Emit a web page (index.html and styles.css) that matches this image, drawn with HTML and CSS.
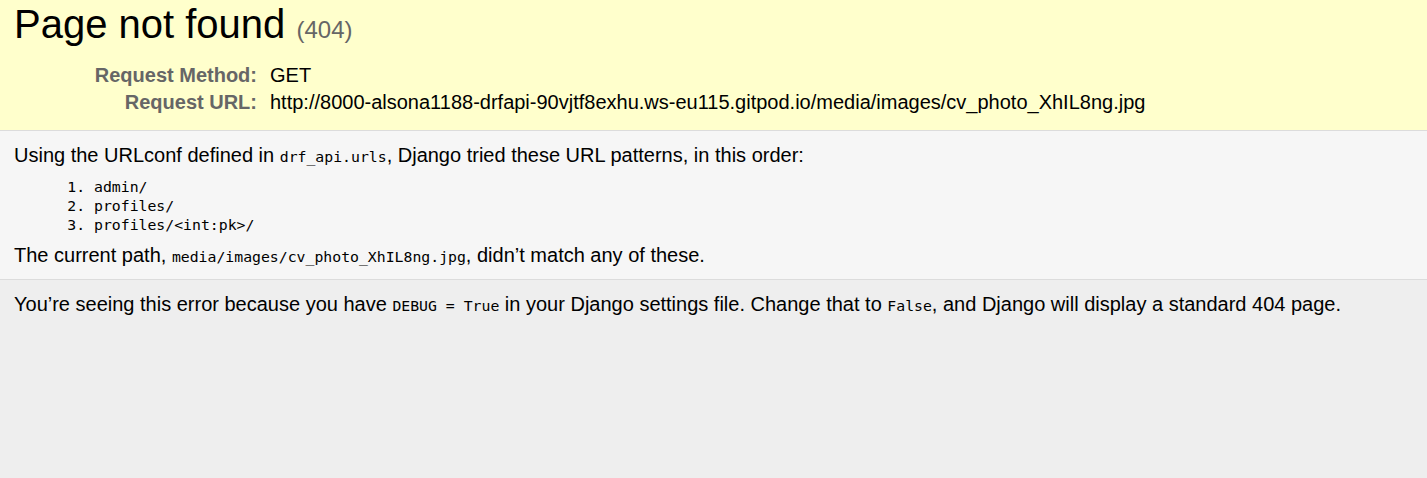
FILE: index.html
```html
<!DOCTYPE html>
<html lang="en">
<head>
<meta charset="utf-8">
<title>Page not found at /media/images/cv_photo_XhIL8ng.jpg</title>
<link rel="stylesheet" href="styles.css">
</head>
<body>
<header class="summary">
  <h1 class="title">Page not found <span class="status">(404)</span></h1>
  <table class="meta">
    <tr>
      <th class="meta-key">Request Method:</th>
      <td class="meta-val">GET</td>
    </tr>
    <tr>
      <th class="meta-key">Request URL:</th>
      <td class="meta-val">http://8000-alsona1188-drfapi-90vjtf8exhu.ws-eu115.gitpod.io/media/images/cv_photo_XhIL8ng.jpg</td>
    </tr>
  </table>
</header>
<main class="info">
  <p class="line">Using the URLconf defined in <code class="code">drf_api.urls</code>, Django tried these URL patterns, in this order:</p>
  <ol class="patterns">
    <li class="pattern">admin/</li>
    <li class="pattern">profiles/</li>
    <li class="pattern">profiles/&lt;int:pk&gt;/</li>
  </ol>
  <p class="line">The current path, <code class="code">media/images/cv_photo_XhIL8ng.jpg</code>, didn’t match any of these.</p>
</main>
<footer class="explanation">
  <p class="line">You’re seeing this error because you have <code class="code">DEBUG = True</code> in your Django settings file. Change that to <code class="code">False</code>, and Django will display a standard 404 page.</p>
</footer>
</body>
</html>
```
FILE: styles.css
```css
html, body {
  margin: 0;
  padding: 0;
}
body {
  font-family: "Liberation Sans", Arial, sans-serif;
  font-size: 20px;
  line-height: normal;
  color: #000;
  background: #eee;
  min-height: 478px;
}
.summary {
  display: block;
  background: #ffc;
  padding: 1px 14px 14px;
  border-bottom: 1px solid #dcdcdc;
}
.title {
  margin: 0 0 15px;
  font-size: 40px;
  font-weight: normal;
  line-height: 46px;
}
.status {
  font-size: 60%;
  color: #666;
  font-weight: normal;
  line-height: 1;
}
.meta {
  border: none;
  border-collapse: collapse;
  width: 100%;
}
.meta-key, .meta-val {
  vertical-align: top;
  padding: 2px 3px;
  line-height: 23px;
}
.meta-key {
  width: 12em;
  text-align: right;
  color: #666;
  padding-right: 0.5em;
  font-weight: bold;
}
.info {
  display: block;
  background: #f6f6f6;
  padding: 13px 14px 12px;
  border-bottom: 1px solid #dcdcdc;
}
.line {
  margin: 0;
  line-height: 23px;
}
.code {
  font-family: "DejaVu Sans Mono", monospace;
  font-size: 14.8px;
  line-height: 1;
}
.patterns {
  margin: 10px 80px;
  padding: 0;
  list-style: none;
  counter-reset: pat;
}
.pattern {
  font-family: "DejaVu Sans Mono", monospace;
  font-size: 14.8px;
  line-height: 19px;
  counter-increment: pat;
}
.pattern::before {
  content: counter(pat) ". ";
  white-space: pre;
  display: inline-block;
  width: 26.7px;
  margin-left: -26.7px;
}
.explanation {
  display: block;
  background: #eee;
  padding: 13px 14px;
}
```
